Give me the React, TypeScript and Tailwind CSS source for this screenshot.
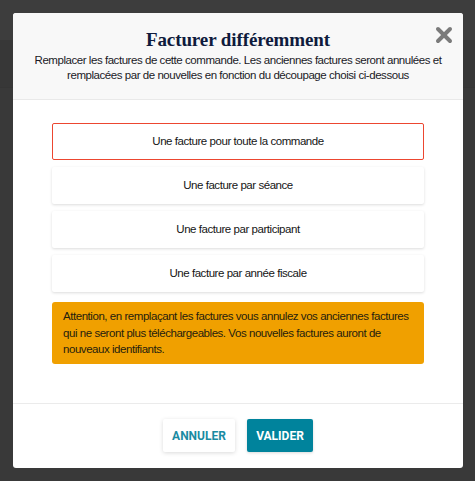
import { X } from "lucide-react";

const options = [
  "Une facture pour toute la commande",
  "Une facture par séance",
  "Une facture par participant",
  "Une facture par année fiscale",
];

export default function App() {
  const selected = 0;

  return (
    <div className="relative h-[481px] w-[475px] overflow-hidden bg-[#393939] font-['Liberation_Sans',Arial,sans-serif] text-[11.5px] tracking-[-0.45px]">
      {/* page behind the backdrop */}
      <div className="h-[40px] bg-[#3d3d3d]" />
      <div className="h-[48px] border-b border-[#353535] bg-[#373737]" />

      <div className="absolute left-[13px] top-[13px] flex h-[455px] w-[450px] flex-col overflow-hidden rounded-[3px] bg-white">
        <header className="relative flex h-[87px] flex-col items-center border-b border-[#e9e9e9] bg-[#f8f8f8] px-3 pt-[15px]">
          <h2 className="font-['Liberation_Serif',serif] text-[19px] leading-[24px] font-bold tracking-[-0.1px] text-[#0f1b3d]">
            Facturer différemment
          </h2>
          <p className="mt-[1px] text-center leading-[15px] text-[#1a1a26]">
            Remplacer les factures de cette commande. Les anciennes factures seront annulées et
            remplacées par de nouvelles en fonction du découpage choisi ci-dessous
          </p>
          <button className="absolute right-[7px] top-[10px] text-[#7b7b7b]">
            <X size={24} strokeWidth={4} />
          </button>
        </header>

        <div className="flex flex-1 flex-col gap-[7px] px-[39px] pt-[23px]">
          {options.map((label, i) => (
            <button
              key={label}
              className={`h-[37px] rounded-[2px] bg-white text-[#151515] ${
                i === selected
                  ? "border border-[#ec4630]"
                  : "shadow-[0_1px_3px_rgba(0,0,0,0.14)]"
              }`}
            >
              {label}
            </button>
          ))}
          <div className="mt-[3px] rounded-[3px] bg-[#f0a000] px-[11px] pt-[6px] pb-[6px] leading-[16.5px] text-[#26200e]">
            Attention, en remplaçant les factures vous annulez vos anciennes factures qui ne seront
            plus téléchargeables. Vos nouvelles factures auront de nouveaux identifiants.
          </div>
        </div>

        <footer className="flex h-[65px] items-center justify-center gap-3 border-t border-[#ebebeb] pb-[1px] tracking-normal">
          <button className="h-[33px] w-[72px] rounded-[2px] bg-white font-['Roboto',sans-serif] text-[12px] font-bold text-[#1a8ba2] shadow-[0_1px_4px_rgba(0,0,0,0.15)]">
            ANNULER
          </button>
          <button className="h-[33px] w-[66px] rounded-[2px] bg-[#00839c] font-['Roboto',sans-serif] text-[12px] font-bold text-white shadow-[0_1px_3px_rgba(0,0,0,0.15)]">
            VALIDER
          </button>
        </footer>
      </div>
    </div>
  );
}
